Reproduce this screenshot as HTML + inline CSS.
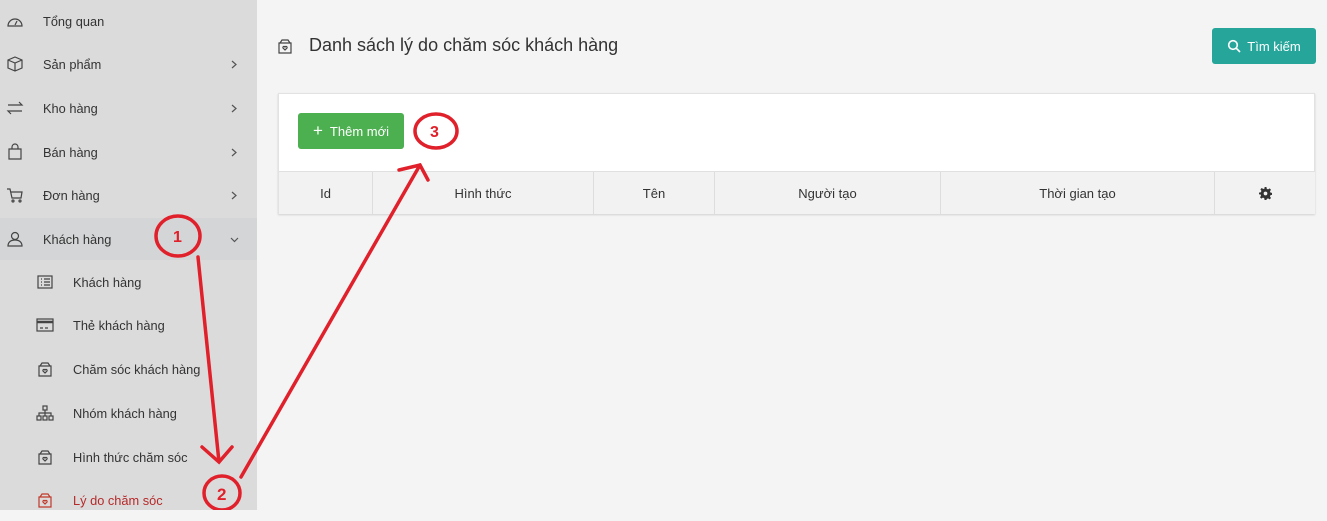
<!DOCTYPE html><html><head><meta charset="utf-8"><style>
*{box-sizing:border-box;margin:0;padding:0}
body{width:1327px;height:510px;overflow:hidden;background:#f4f4f4;font-family:"Liberation Sans",sans-serif;font-size:13px;color:#333;position:relative}
.sb{position:absolute;left:0;top:0;width:257px;height:510px;background:#dcdbdb}
.it{position:absolute;left:0;width:257px;height:42px;display:flex;align-items:center}
.it .ic{position:absolute;left:6px;top:12px}
.it .tx{position:absolute;left:43px;font-size:12.8px}
.it .ch{position:absolute;left:231px;top:17px}
.sub .ic{left:36px}
.sub .tx{left:73px}
.card{position:absolute;left:278px;top:93px;width:1037px;height:121px;background:#fff;border:1px solid #e2e2e2;box-shadow:0 1px 2px rgba(0,0,0,.15)}
.th{position:absolute;top:77px;height:43px;background:#f2f2f2;border-top:1px solid #e0e0e0;border-right:1px solid #ddd;display:flex;align-items:center;justify-content:center}
</style></head><body>
<div class="sb">
<div class="it" style="top:0"><svg class="ic" width="18" height="18" viewBox="0 0 18 18" fill="none" stroke="#444" stroke-width="1.2"><path d="M2 14a7 7 0 1 1 14 0z"/><path d="M9 13l2-4"/></svg><span class="tx">Tổng quan</span></div>
<div class="it" style="top:43px"><svg class="ic" width="18" height="18" viewBox="0 0 18 18" fill="none" stroke="#444" stroke-width="1.2"><path d="M9 2l7 3v8l-7 3-7-3V5z M2 5l7 3 7-3 M9 8v8"/></svg><span class="tx">Sản phẩm</span><svg class="ch" width="6" height="9" viewBox="0 0 6 9" fill="none" stroke="#555" stroke-width="1.2"><path d="M1 1l4 3.5L1 8"/></svg></div>
<div class="it" style="top:87px"><svg class="ic" width="18" height="18" viewBox="0 0 18 18" fill="none" stroke="#444" stroke-width="1.2"><path d="M2 6h14l-3-3 M16 12H2l3 3"/></svg><span class="tx">Kho hàng</span><svg class="ch" width="6" height="9" viewBox="0 0 6 9" fill="none" stroke="#555" stroke-width="1.2"><path d="M1 1l4 3.5L1 8"/></svg></div>
<div class="it" style="top:131px"><svg class="ic" width="18" height="18" viewBox="0 0 18 18" fill="none" stroke="#444" stroke-width="1.2"><path d="M3 6h12v10H3z M6 6V4a3 3 0 0 1 6 0v2"/></svg><span class="tx">Bán hàng</span><svg class="ch" width="6" height="9" viewBox="0 0 6 9" fill="none" stroke="#555" stroke-width="1.2"><path d="M1 1l4 3.5L1 8"/></svg></div>
<div class="it" style="top:174px"><svg class="ic" width="18" height="18" viewBox="0 0 18 18" fill="none" stroke="#444" stroke-width="1.2"><path d="M1 3h3l2 9h9l1-6H5"/><circle cx="7" cy="15" r="1"/><circle cx="14" cy="15" r="1"/></svg><span class="tx">Đơn hàng</span><svg class="ch" width="6" height="9" viewBox="0 0 6 9" fill="none" stroke="#555" stroke-width="1.2"><path d="M1 1l4 3.5L1 8"/></svg></div>
<div class="it" style="top:218px;background:#d3d5d6"><svg class="ic" width="18" height="18" viewBox="0 0 18 18" fill="none" stroke="#444" stroke-width="1.2"><circle cx="9" cy="6" r="3.5"/><path d="M2 16c0-4 3-6 7-6s7 2 7 6z"/></svg><span class="tx">Khách hàng</span><svg class="ch" style="top:19px;left:230px" width="9" height="6" viewBox="0 0 9 6" fill="none" stroke="#555" stroke-width="1.2"><path d="M1 1l3.5 3.5L8 1"/></svg></div>
<div class="it sub" style="top:261px"><svg class="ic" width="18" height="18" viewBox="0 0 18 18" fill="none" stroke="#444" stroke-width="1.2"><rect x="2" y="3" width="14" height="12"/><path d="M5 6h1M8 6h6M5 9h1M8 9h6M5 12h1M8 12h6"/></svg><span class="tx">Khách hàng</span></div>
<div class="it sub" style="top:304px"><svg class="ic" width="18" height="18" viewBox="0 0 18 18" fill="none" stroke="#444" stroke-width="1.2"><rect x="1" y="3" width="16" height="12"/><path d="M1 6h16" stroke-width="2.5"/><path d="M4 12h3M9 12h3"/></svg><span class="tx">Thẻ khách hàng</span></div>
<div class="it sub" style="top:348px"><svg class="ic" width="18" height="18" viewBox="0 0 18 18" fill="none" stroke="#444" stroke-width="1.2"><path d="M3 6h12v10H3z M4 6l2-3h6l2 3 M9 13l-2-2a1 1 0 0 1 2-1 1 1 0 0 1 2 1z"/></svg><span class="tx">Chăm sóc khách hàng</span></div>
<div class="it sub" style="top:392px"><svg class="ic" width="18" height="18" viewBox="0 0 18 18" fill="none" stroke="#444" stroke-width="1.2"><rect x="7" y="2" width="4" height="4"/><rect x="1" y="12" width="4" height="4"/><rect x="7" y="12" width="4" height="4"/><rect x="13" y="12" width="4" height="4"/><path d="M9 6v6M3 12V9h12v3"/></svg><span class="tx">Nhóm khách hàng</span></div>
<div class="it sub" style="top:436px"><svg class="ic" width="18" height="18" viewBox="0 0 18 18" fill="none" stroke="#444" stroke-width="1.2"><path d="M3 6h12v10H3z M4 6l2-3h6l2 3 M9 13l-2-2a1 1 0 0 1 2-1 1 1 0 0 1 2 1z"/></svg><span class="tx">Hình thức chăm sóc</span></div>
<div class="it sub" style="top:479px"><svg class="ic" width="18" height="18" viewBox="0 0 18 18" fill="none" stroke="#c0392b" stroke-width="1.2"><path d="M3 6h12v10H3z M4 6l2-3h6l2 3 M9 13l-2-2a1 1 0 0 1 2-1 1 1 0 0 1 2 1z"/></svg><span class="tx" style="color:#b52a2a">Lý do chăm sóc</span></div>
</div>
<svg style="position:absolute;left:276px;top:37px" width="18" height="18" viewBox="0 0 18 18" fill="none" stroke="#444" stroke-width="1.2"><path d="M3 6h12v10H3z M4 6l2-3h6l2 3 M9 13l-2-2a1 1 0 0 1 2-1 1 1 0 0 1 2 1z"/></svg>
<div style="position:absolute;left:309px;top:35px;font-size:18px;color:#333">Danh sách lý do chăm sóc khách hàng</div>
<div style="position:absolute;left:1212px;top:28px;width:104px;height:36px;background:#26a69a;border-radius:3px;color:#fff;display:flex;align-items:center;justify-content:center;gap:6px"><svg width="14" height="14" viewBox="0 0 14 14" fill="none" stroke="#fff" stroke-width="1.6"><circle cx="6" cy="6" r="4.3"/><path d="M9.2 9.2L13 13"/></svg>Tìm kiếm</div>
<div class="card">
<div style="position:absolute;left:19px;top:19px;width:106px;height:36px;background:#4caf50;border-radius:3px;color:#fff;display:flex;align-items:center;justify-content:center"><span style="font-size:17px;margin-right:7px">+</span>Thêm mới</div>
<div class="th" style="left:0;width:94px">Id</div>
<div class="th" style="left:94px;width:221px">Hình thức</div>
<div class="th" style="left:315px;width:121px">Tên</div>
<div class="th" style="left:436px;width:226px">Người tạo</div>
<div class="th" style="left:662px;width:274px">Thời gian tạo</div>
<div class="th" style="left:936px;width:100px;border-right:none"><svg width="13" height="13" viewBox="0 0 14 14"><path fill="#333" d="M6 0h2l.4 2 1.4.6 1.7-1.1 1.4 1.4-1.1 1.7.6 1.4 2 .4v2l-2 .4-.6 1.4 1.1 1.7-1.4 1.4-1.7-1.1-1.4.6L8 14H6l-.4-2-1.4-.6-1.7 1.1-1.4-1.4 1.1-1.7L1.6 8 0 8V6l2-.4.6-1.4L1.5 2.5l1.4-1.4 1.7 1.1L6 1.6z"/><circle cx="7" cy="7" r="2" fill="#f2f2f2"/></svg></div>
</div>
<svg style="position:absolute;left:0;top:0" width="1327" height="510" fill="none" stroke="#e0202a" stroke-width="3.5" stroke-linecap="round">
<ellipse cx="178" cy="236" rx="22" ry="20"/>
<ellipse cx="222" cy="493" rx="18" ry="17"/>
<ellipse cx="436" cy="131" rx="21" ry="17"/>
<path d="M198 257L219 462M202 447L219 462L232 447"/>
<path d="M241 477L420 165M399 170L420 165L428 180"/>
<text x="173" y="242" font-family="Liberation Sans" font-weight="bold" font-size="16" fill="#e0202a" stroke="none">1</text>
<text x="217" y="500" font-family="Liberation Sans" font-weight="bold" font-size="17" fill="#e0202a" stroke="none">2</text>
<text x="430" y="137" font-family="Liberation Sans" font-weight="bold" font-size="16" fill="#e0202a" stroke="none">3</text>
</svg>
</body></html>
